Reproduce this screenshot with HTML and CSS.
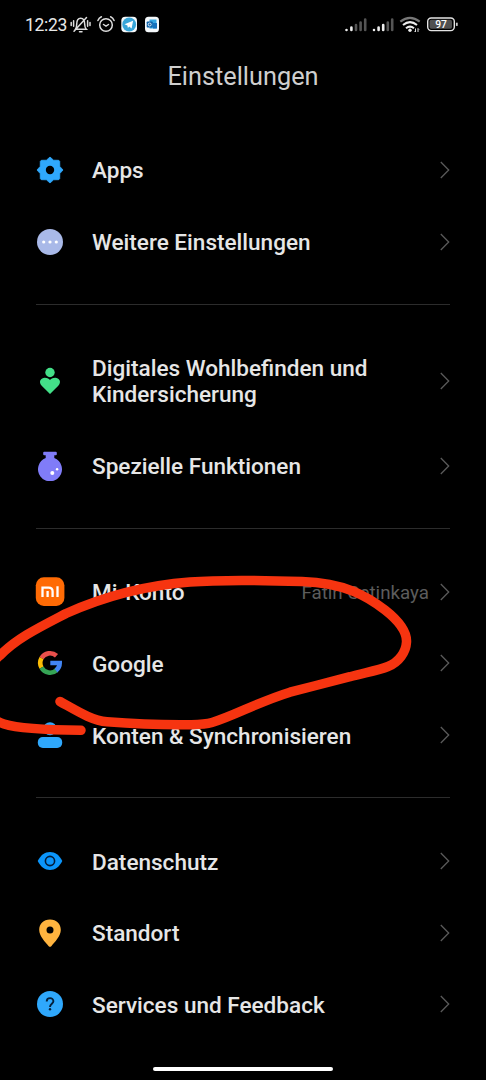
FILE: index.html
```html
<!DOCTYPE html>
<html lang="de">
<head>
<meta charset="utf-8">
<title>Einstellungen</title>
<link rel="stylesheet" href="styles.css">
</head>
<body>
<div class="screen">
  <header class="status">
    <span class="clock">12:23</span>
    <svg class="status-left" width="90" height="20" viewBox="70 15 90 20">
      <g fill="none" stroke="#ddd" stroke-width="1.5" stroke-linecap="round">
        <path d="M75.5 29.2h10.800c-1.300-1.300-1.600-2.300-1.600-5 0-4-1.300-6-4-6s-4 2-4 6c0 2.700-.3 3.700-1.200 5zM79.500 31.700h2.500M74 31.200 86.500 17.500M71.200 22.500v3M73.600 20.800v5.500M87.600 20.800v5.500M90 22.500v3"/>
        <circle cx="106" cy="25" r="6.300"/>
        <path d="M103.500 24.500l2.500 1.700 2.500-1.700M97.900 20.500q1-2.500 3.500-3.700M114.100 20.500q-1-2.500-3.500-3.700"/>
      </g>
      <rect x="121.300" y="16.800" width="15.700" height="15.500" rx="4" fill="#f4f8fa"/>
      <circle cx="129.200" cy="24.500" r="6.900" fill="#37a5d8"/>
      <path d="M124.500 24.300l8.600-3.500-1.500 7.600-2.400-1.800-1.300 1.300-.5-2.500z" fill="#fff"/>
      <rect x="145" y="16.800" width="14" height="15.500" rx="3.500" fill="#f4f8fa"/>
      <path d="M149.500 19.500h7v9h-7z" fill="#35a8e4"/>
      <path d="M153 23h4v5.500h-4z" fill="#1672bd"/>
      <rect x="146.700" y="21.500" width="6" height="6" rx=".7" fill="#0e62a9"/>
      <circle cx="149.700" cy="24.500" r="1.500" fill="none" stroke="#fff" stroke-width=".8"/>
    </svg>
    <svg class="status-right" width="118" height="20" viewBox="343 15 118 20">
      <g stroke-width="2.600" stroke-linecap="round">
        <path stroke="#eee" d="M346.500 30v0M351.400 30v-2.500M374 30v0M378.600 30v-2.500M383.200 30v-5"/>
        <path stroke="#555" d="M356 30v-5M360.600 30v-7.500M365.200 30v-10.500M387.800 30v-7.500M392.200 30v-10.500"/>
      </g>
      <g fill="none" stroke-width="2.100">
        <path stroke="#777" d="M400.300 21.700q9.700-7.500 19.400 0"/>
        <path stroke="#eee" d="M403 25q7-5.600 14 0M406 28.200q4-3.200 8 0"/>
      </g>
      <circle cx="410" cy="30.300" r="1.700" fill="#eee"/>
      <path d="M415.500 28.500v3.500m-1-1 1 1M418 32v-3.500m1 1-1-1" stroke="#ddd" fill="none"/>
      <rect x="427.700" y="18" width="26.600" height="12.600" rx="3.500" fill="#000" stroke="#e4e4e4" stroke-width="1.400"/>
      <rect x="429.500" y="19.800" width="22.500" height="9" rx="1.800" fill="#505050"/>
      <path d="M456.800 22.700v3.200" stroke="#ccc" stroke-width="1.800"/>
      <text class="battery-text" x="441" y="28" text-anchor="middle">97</text>
    </svg>
  </header>
  <h1 class="title">Einstellungen</h1>

  <main class="list">
    <section class="group">
      <div class="row">
        <svg class="icon" viewBox="-15 -15 30 30"><path d="M0-13 3.600-9.800 8.700-9.700 9.700-8.700 9.800-3.600 13 0 9.800 3.600 9.700 8.700 8.700 9.700 3.600 9.800 0 13-3.600 9.800-8.700 9.700-9.700 8.700-9.800 3.600-13 0-9.800-3.600-9.700-8.700-8.700-9.700-3.600-9.800z" fill="#2fa8fc" stroke="#2fa8fc" stroke-width=".8" stroke-linejoin="round"/><circle r="4.200"/></svg>
        <span class="label">Apps</span>
        <svg class="chevron" viewBox="0 0 10 18"><path d="M.8 1 8.700 9 .8 17"/></svg>
      </div>
      <div class="row">
        <svg class="icon" viewBox="-15 -15 30 30"><circle r="13" fill="#a9b9e8"/><g fill="#fff"><circle cx="-6.300" r="1.600"/><circle r="1.600"/><circle cx="6.300" r="1.600"/></g></svg>
        <span class="label">Weitere Einstellungen</span>
        <svg class="chevron" viewBox="0 0 10 18"><path d="M.8 1 8.700 9 .8 17"/></svg>
      </div>
    </section>
    <section class="group">
      <div class="row tall">
        <svg class="icon" viewBox="-15 -15 30 30"><circle cy="-8.500" r="4.700" fill="#43df88"/><path d="M0 13-8.300 4.700C-12 .5-9-3.300-5.200-3.300-2.500-3.300-.8-2 0-.9.8-2 2.500-3.300 5.200-3.300 9-3.300 12 .5 8.300 4.700z" fill="#43df88"/></svg>
        <span class="label">Digitales Wohlbefinden und<br>Kindersicherung</span>
        <svg class="chevron" viewBox="0 0 10 18"><path d="M.8 1 8.700 9 .8 17"/></svg>
      </div>
      <div class="row">
        <svg class="icon" viewBox="-15 -15 30 30"><path d="M-5.800-14.300H5.800q1 0 1 1v1.500q0 1-1 1H4.300V-8A12 12 0 1 1-4.300-8v-2.800H-5.800q-1 0-1-1v-1.500q0-1 1-1z" fill="#807cf8"/><circle cx="2.300" cy="7" r="2" fill="#fff"/><circle cx="7.100" cy="3.200" r="1.200" fill="#fff"/></svg>
        <span class="label">Spezielle Funktionen</span>
        <svg class="chevron" viewBox="0 0 10 18"><path d="M.8 1 8.700 9 .8 17"/></svg>
      </div>
    </section>
    <section class="group">
      <div class="row">
        <svg class="icon" viewBox="-15 -15 30 30"><rect x="-14.200" y="-14.700" width="28.600" height="28.600" rx="8" fill="#ff6b05"/><path d="M-7.500 5.100V-4.400H-1.300Q2.600-4.400 2.600-.6V5.100M-2.400 5.100V-.9M7.500 5.100V-5.700" fill="none" stroke="#fff" stroke-width="2.300"/></svg>
        <span class="label">Mi-Konto</span>
        <span class="value">Fatih Cetinkaya</span>
        <svg class="chevron" viewBox="0 0 10 18"><path d="M.8 1 8.700 9 .8 17"/></svg>
      </div>
      <div class="row">
        <svg class="icon" viewBox="-15 -15 30 30"><g fill="none" stroke-width="4.600"><path d="M-8.500-4.800A9.700 9.700 0 0 1 6.500-7.200" stroke="#e9504c"/><path d="M-8.500 4.600A9.700 9.700 0 0 1-8.500-4.800" stroke="#fbbc05"/><path d="M6.500 7.200A9.700 9.700 0 0 1-8.500 4.600" stroke="#35a455"/><path d="M.3 0H9.700A9.700 9.700 0 0 1 6 7.600" stroke="#4285f4"/></g></svg>
        <span class="label">Google</span>
        <svg class="chevron" viewBox="0 0 10 18"><path d="M.8 1 8.700 9 .8 17"/></svg>
      </div>
      <div class="row">
        <svg class="icon" viewBox="-15 -15 30 30"><circle cy="-6.300" r="6.500" fill="#2fa8fc"/><rect x="-12.200" y="2" width="24.400" height="11" rx="5" fill="#2fa8fc"/></svg>
        <span class="label">Konten &amp; Synchronisieren</span>
        <svg class="chevron" viewBox="0 0 10 18"><path d="M.8 1 8.700 9 .8 17"/></svg>
      </div>
    </section>
    <section class="group">
      <div class="row">
        <svg class="icon" viewBox="-15 -15 30 30"><path d="M-12.300 0C-9.500-5.800-5-9 0-9S9.500-5.800 12.300 0C9.500 5.800 5 9 0 9S-9.500 5.800-12.300 0z" fill="#0b95fa"/><circle r="4.600" fill="none" stroke="#031b38" stroke-width="1.600"/></svg>
        <span class="label">Datenschutz</span>
        <svg class="chevron" viewBox="0 0 10 18"><path d="M.8 1 8.700 9 .8 17"/></svg>
      </div>
      <div class="row">
        <svg class="icon" viewBox="-15 -15 30 30"><path d="M0-13.400C6.500-13.400 10.800-8.700 10.800-3 10.800 3 4.700 9.200 1.300 13.200Q0 14.500-1.300 13.200C-4.700 9.200-10.800 3-10.800-3-10.800-8.700-6.500-13.400 0-13.400z" fill="#ffb43f"/><circle cy="-3" r="3.500"/></svg>
        <span class="label">Standort</span>
        <svg class="chevron" viewBox="0 0 10 18"><path d="M.8 1 8.700 9 .8 17"/></svg>
      </div>
      <div class="row">
        <svg class="icon" viewBox="-15 -15 30 30"><circle r="13" fill="#2fa8fc"/><path d="M-3.300-2.600C-3.300-7 3.400-7 3.400-2.700 3.400-.3 0 0 0 3" fill="none" stroke="#04203c" stroke-width="1.900"/><circle cy="5.300" r="1.200" fill="#04203c"/></svg>
        <span class="label">Services und Feedback</span>
        <svg class="chevron" viewBox="0 0 10 18"><path d="M.8 1 8.700 9 .8 17"/></svg>
      </div>
    </section>
  </main>

  <svg class="marker" width="486" height="1080" viewBox="0 0 486 1080">
    <path d="M81 730.300C50 730 20 729 4 724C-8 720-24 710-24 692C-24 678-10 664 0 655.500C17 638 40 627 66 613.500C105 596 150 585 190 582C215 580 270 580.500 302 581.500C345 583 367 596 385 610C399 621 407 632 406.500 642C406 652 399 662 388 666.500C378 670.500 363 673 350 676.700C330 682 310 687 290 692.200C258 702 235 715.500 212 722.500C205 724.500 200 724.500 190 724.700C165 725 135 724 107 721.800C92 720.500 78 711.500 60 701.500"/>
  </svg>
  <div class="home-bar"></div>
</div>
</body>
</html>
```
FILE: styles.css
```css
* { box-sizing: border-box; }
body { margin: 0; background: #000; }
.screen {
  position: relative;
  width: 486px;
  height: 1080px;
  overflow: hidden;
  background: #000;
  color: #e6e6e6;
  font-family: Roboto, sans-serif;
}
.status {
  display: flex;
  align-items: center;
  height: 50px;
  padding: 0 25px;
}
.clock {
  width: 45px;
  font-size: 17.500px;
  line-height: 20px;
  letter-spacing: -.3px;
  color: #e8e8e8;
  white-space: nowrap;
}
.status-left, .status-right { display: block; flex: none; }
.status-right { margin-left: auto; }
.battery-text { font: 500 10.300px Roboto, sans-serif; fill: #fff; }
.title {
  margin: 0;
  height: 84.200px;
  padding-top: 12px;
  font-size: 25.300px;
  line-height: 30px;
  font-weight: 400;
  text-align: center;
  color: #cfcfcf;
}
.group + .group {
  margin-top: 26.600px;
  padding-top: 28.100px;
  position: relative;
}
.group + .group::before {
  content: "";
  position: absolute;
  top: 0;
  left: 36px;
  right: 36px;
  height: 1px;
  background: #2c2c2c;
}
.row {
  display: flex;
  align-items: center;
  height: 71.600px;
  padding: 0 36px 0 35px;
}
.tall { height: 97.700px; }
.icon { width: 30px; height: 30px; flex: none; margin-right: 27px; }
.label {
  flex: 1;
  padding-top: 3px;
  font-size: 22.550px;
  line-height: 26px;
  font-weight: 500;
  white-space: nowrap;
}
.value { padding-top: 2px; margin-right: 11px; font-size: 18.750px; color: #5c5c5c; }
.chevron { width: 10px; height: 18px; flex: none; }
.chevron path { fill: none; stroke: #5a5a5a; stroke-width: 1.300; }
.marker { position: absolute; top: 0; left: 0; }
.marker path { fill: none; stroke: #f63410; stroke-width: 9.500; stroke-linecap: round; stroke-linejoin: round; }
.home-bar {
  position: absolute;
  left: 153px;
  bottom: 9px;
  width: 180px;
  height: 4.500px;
  border-radius: 2px;
  background: #fff;
}
```
